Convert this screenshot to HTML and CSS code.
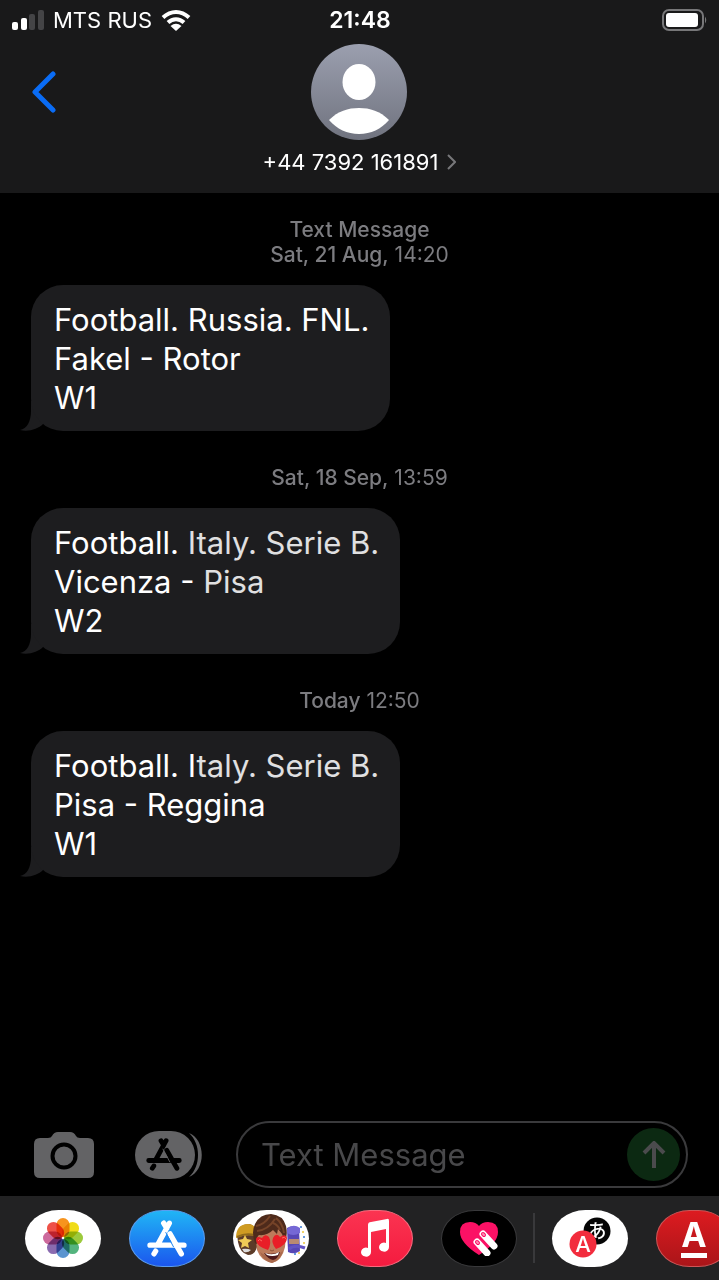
FILE: index.html
```html
<!DOCTYPE html>
<html lang="en">
<head>
    <meta charset="UTF-8">
    <meta name="viewport" content="width=device-width, initial-scale=1.0">
    <title>Messages</title>
    <link rel="stylesheet" href="styles.css">
</head>
<body>
    <svg class="defs" aria-hidden="true">
        <symbol id="store" viewBox="0 0 120 110">
            <g fill="none" stroke="currentColor" stroke-width="16" stroke-linecap="round">
                <path d="M67 9L34 70M50 9l9 15M26 93l-5 8M9 75h102"/>
                <path d="M69 41L103 101"/>
            </g>
            <path d="M56 36L80 81" fill="none" stroke="var(--gap)" stroke-width="3"/>
        </symbol>
        <symbol id="tail" viewBox="0 0 28 30">
            <path d="M11 0V10C11 20 7 28 0 29C9 31 18 28 23 23L28 16V0z" fill="#1d1d1f"/>
        </symbol>
    </svg>

    <header class="header">
        <div class="status">
            <div class="carrier">
                <svg width="32" height="20" viewBox="0 0 32 20">
                    <rect y="12" width="6" height="8" rx="2" fill="#fff"/>
                    <rect x="9" y="8" width="6" height="12" rx="2" fill="#fff"/>
                    <rect x="17" y="4" width="6" height="16" rx="2" fill="#444446"/>
                    <rect x="26" width="6" height="20" rx="2" fill="#444446"/>
                </svg>
                <span>MTS RUS</span>
                <svg width="30" height="22" viewBox="0 0 30 22">
                    <g fill="none" stroke="#fff" stroke-width="4">
                        <path d="M2 8.500Q8 3 15 3T28 8.500"/>
                        <path d="M7 13.500Q10.500 10.200 15 10.200T23 13.500"/>
                    </g>
                    <path d="M9.500 17Q15 12.500 20.500 17L15 22z" fill="#fff"/>
                </svg>
            </div>
            <time class="clock">21:48</time>
            <svg class="battery" width="46" height="22" viewBox="0 0 46 22">
                <rect x="1" y="1" width="40" height="20" rx="6" fill="none" stroke="#777779" stroke-width="2"/>
                <rect x="4" y="4" width="32" height="14" rx="3" fill="#fff"/>
                <path d="M43 7.500q2.500 3.500 0 7z" fill="#777779"/>
            </svg>
        </div>
        <div class="contact-bar">
            <button class="back" aria-label="Back">
                <svg width="24" height="42" viewBox="0 0 24 42">
                    <path d="M21 3L3 21L21 39" fill="none" stroke="#0a6cf5" stroke-width="5" stroke-linecap="round" stroke-linejoin="round"/>
                </svg>
            </button>
            <button class="contact">
                <svg width="96" height="96" viewBox="0 0 96 96">
                    <defs>
                        <linearGradient id="avatar" x2="0" y2="1">
                            <stop offset="0" stop-color="#9b9faf"/>
                            <stop offset="1" stop-color="#70737f"/>
                        </linearGradient>
                    </defs>
                    <circle cx="48" cy="48" r="48" fill="url(#avatar)"/>
                    <ellipse cx="48" cy="38" rx="16.500" ry="18" fill="#fff"/>
                    <path d="M18 76C27 67 37 64 48 64S69 67 78 76C70 85 60 90 48 90S26 85 18 76z" fill="#fff"/>
                </svg>
                <span class="number">+44 7392 161891
                    <svg width="10" height="16" viewBox="0 0 10 16"><path d="M2 1l7 7l-7 7" fill="none" stroke="#77777a" stroke-width="2"/></svg>
                </span>
            </button>
        </div>
    </header>

    <main class="thread">
        <p class="stamp"><b>Text Message</b><br><b>Sat, 21 Aug,</b> 14:20</p>
        <div class="bubble">
            Football. Russia. FNL.<br>Fakel - Rotor<br>W1
            <svg class="tail"><use href="#tail"/></svg>
        </div>
        <p class="stamp"><b>Sat, 18 Sep,</b> 13:59</p>
        <div class="bubble">
            Football. <span class="dim">Italy. Serie B.</span><br>Vicenza - <span class="dim">Pisa</span><br>W2
            <svg class="tail"><use href="#tail"/></svg>
        </div>
        <p class="stamp"><b>Today</b> 12:50</p>
        <div class="bubble">
            Football. I<span class="dim">taly. Serie B.</span><br>Pisa - Reggina<br>W1
            <svg class="tail"><use href="#tail"/></svg>
        </div>
    </main>

    <form class="compose">
        <button type="button" class="camera" aria-label="Camera">
            <svg width="60" height="46" viewBox="0 0 60 46">
                <path d="M6 6H14Q17 6 18 4Q20 0 24 0H36Q40 0 42 4Q43 6 46 6H54Q60 6 60 12V40Q60 46 54 46H6Q0 46 0 40V12Q0 6 6 6z" fill="#636365"/>
                <circle cx="30" cy="24" r="11.500" fill="none" stroke="#000" stroke-width="4"/>
            </svg>
        </button>
        <button type="button" class="apps-toggle" aria-label="Apps">
            <svg width="67" height="48" viewBox="0 0 67 48">
                <rect width="60" height="48" rx="24" fill="#636365"/>
                <path d="M54 2C71 9 71 39 54 46C66 35 66 13 54 2z" fill="#636365"/>
                <use href="#store" x="11" y="7" width="36" height="33"/>
            </svg>
        </button>
        <div class="field">
            <input type="text" placeholder="Text Message" aria-label="Text Message">
            <button type="button" class="send" aria-label="Send">
                <svg width="24" height="28" viewBox="0 0 24 28"><path d="M12 27V3M2 12L12 2L22 12" fill="none" stroke="#4b4b4d" stroke-width="4"/></svg>
            </button>
        </div>
    </form>

    <nav class="tray">
        <div class="group">
            <button class="app photos" aria-label="Photos">
                <svg width="40" height="40" viewBox="-20 -20 40 40">
                    <g class="petals">
                        <rect x="-6.500" y="-20" width="13" height="19" rx="6.500" fill="#f7941e"/>
                        <rect x="-6.500" y="-20" width="13" height="19" rx="6.500" fill="#f0dc18" transform="rotate(45)"/>
                        <rect x="-6.500" y="-20" width="13" height="19" rx="6.500" fill="#9cca3c" transform="rotate(90)"/>
                        <rect x="-6.500" y="-20" width="13" height="19" rx="6.500" fill="#54b47e" transform="rotate(135)"/>
                        <rect x="-6.500" y="-20" width="13" height="19" rx="6.500" fill="#5a94d0" transform="rotate(180)"/>
                        <rect x="-6.500" y="-20" width="13" height="19" rx="6.500" fill="#8a6bb0" transform="rotate(225)"/>
                        <rect x="-6.500" y="-20" width="13" height="19" rx="6.500" fill="#cc6a9c" transform="rotate(270)"/>
                        <rect x="-6.500" y="-20" width="13" height="19" rx="6.500" fill="#ee5148" transform="rotate(315)"/>
                    </g>
                </svg>
            </button>
            <button class="app store" aria-label="App Store">
                <svg width="40" height="37"><use href="#store"/></svg>
            </button>
            <button class="app memoji" aria-label="Memoji">
                <svg width="76" height="57" viewBox="0 0 76 57">
                    <path d="M4 24Q6 14 16 14Q23 15 24 25V37Q22 45 15 45Q7 43 5 32z" fill="#5c3b28"/>
                    <path d="M3 28Q3 14 15 14Q24 14 25 27Q15 23 3 28z" fill="#cf9b22"/>
                    <path d="M4 27Q14 22 24 26" fill="none" stroke="#8f691b" stroke-width="2"/>
                    <path d="M12 25l2 4l5 1l-4 3l1 5l-4-2l-4 2l1-5l-4-3l5-1z" fill="#f0cb57"/>
                    <path d="M9 39Q14 38 18 40Q15 43 11 42z" fill="#ddd"/>
                    <path d="M54 18Q60 14 66 19L67 41Q61 45 55 42z" fill="#5747b5"/>
                    <path d="M54 19Q60 13 67 18V23Q60 27 54 23z" fill="#7568d5"/>
                    <path d="M56 29H66V34H56z" fill="#b98a72"/>
                    <path d="M56 39Q62 34 72 38" fill="none" stroke="#6254c4" stroke-width="3"/>
                    <g fill="#3478d5"><circle cx="68" cy="17" r="1"/><circle cx="71" cy="27" r="1"/><circle cx="62" cy="44" r="1"/></g>
                    <g fill="#edc63a"><circle cx="70" cy="22" r="1"/><circle cx="66" cy="43" r="1"/><circle cx="71" cy="33" r="1"/></g>
                    <path d="M22 23Q26 12 38 12Q51 12 53 25L52 37Q49 51 39 53Q28 51 24 40z" fill="#bd7b5b"/>
                    <path d="M27 42Q38 50 50 41Q48 50 39 53Q30 51 27 42z" fill="#a9694c"/>
                    <path d="M22 33Q18 22 22 14Q27 4 38 4Q50 5 53 16Q55 25 52 32L49 24L45 19L44 24L40 20Q34 26 26 25Q23 27 24 34z" fill="#4e2a1b"/>
                    <path d="M24 21Q35 20 42 9M23 16Q31 15 37 6M43 8Q50 14 51 23M40 13Q45 15 47 20" fill="none" stroke="#754328" stroke-width="2"/>
                    <g fill="#e91e27">
                        <path d="M35 40Q23 36 23 30Q23 25 29 28Q32 23 36 27Q39 33 35 40z"/>
                        <path d="M43 39Q38 33 40 28Q43 22 47 27Q53 23 54 28Q54 35 43 39z"/>
                    </g>
                    <path d="M25 31q1-3 4 0M49 28q3-2 4 1" stroke="#ff6a62" fill="none"/>
                    <path d="M31 43Q39 45 47 42Q45 49 40 50Q35 49 31 43z" fill="#4d191c"/>
                    <path d="M32 43Q40 46 46 42L45 45Q39 47 34 45z" fill="#fff"/>
                    <path d="M37 40q2 2 4 0" fill="none" stroke="#8d5038"/>
                </svg>
            </button>
            <button class="app music" aria-label="Music">
                <svg width="32" height="40" viewBox="0 0 32 40">
                    <path d="M9 7Q9 4 12 4L28 1Q30 0 30 3V29A5 4.500 0 1 1 27 25V11L12 14V34A5 4.500 0 1 1 9 30z" fill="#fff"/>
                </svg>
            </button>
            <button class="app touch" aria-label="Digital Touch">
                <svg width="40" height="36" viewBox="0 0 40 36">
                    <path d="M20 35Q1 23 1 12Q1 2 11 2Q17 2 20 6Q23 2 29 2Q39 2 39 12Q39 23 20 35z" fill="#fb1165"/>
                    <g fill="none" stroke-linecap="round">
                        <path d="M24 14L35 26M18 22L28 33" stroke="#fff" stroke-width="7" stroke-linecap="round"/>
                        <path d="M24 14l1 1M18 22l1 1" stroke="#fb1165" stroke-width="4"/>
                        <path d="M24 14l1 1M18 22l1 1" stroke="#ff8fb5" stroke-width="2"/>
                    </g>
                </svg>
            </button>
        </div>
        <div class="group">
            <button class="app translate" aria-label="Translate">
                <svg width="42" height="42" viewBox="0 0 42 42">
                    <circle cx="28" cy="14" r="13.500" fill="#050505"/>
                    <text class="kana" x="28" y="21">あ</text>
                    <circle cx="14" cy="27" r="13.500" fill="#f22c3d"/>
                    <text class="latin" x="14" y="35">A</text>
                </svg>
            </button>
            <button class="app alfa" aria-label="Alfa"><span>A</span></button>
        </div>
    </nav>
</body>
</html>
```

FILE: styles.css
```css
* { box-sizing: border-box; }
body {
    margin: 0;
    min-height: 100vh;
    display: flex;
    flex-direction: column;
    overflow-x: hidden;
    background: #000;
    color: #fff;
    font-family: Inter, "Liberation Sans", sans-serif;
}
button { padding: 0; border: 0; background: none; color: inherit; font: inherit; }
svg { display: block; flex: none; }
.defs { position: absolute; width: 0; height: 0; }

/* header */
.header { background: #19191a; padding-bottom: 17px; }
.status {
    display: grid;
    grid-template-columns: 1fr auto 1fr;
    align-items: center;
    height: 40px;
    padding: 0 11px 0 12px;
    font-size: 22px;
}
.carrier { display: flex; align-items: center; gap: 9px; }
.clock { font-size: 23px; font-weight: 600; }
.battery { justify-self: end; }
.contact-bar {
    display: grid;
    grid-template-columns: 1fr auto 1fr;
    align-items: start;
    padding: 4px 32px 0;
}
.back { justify-self: start; margin-top: 27px; }
.contact { display: flex; flex-direction: column; align-items: center; gap: 8px; }
.number { display: flex; align-items: center; gap: 8px; font-size: 22px; line-height: 28px; }

/* messages */
.thread { flex: 1; padding: 24px 31px; }
.stamp {
    margin: 0 0 18px;
    text-align: center;
    font-size: 21px;
    line-height: 25px;
    color: #7c7c80;
}
.stamp b { font-weight: 500; }
.bubble {
    position: relative;
    width: fit-content;
    margin-bottom: 34px;
    padding: 15px 21px 14px 23px;
    border-radius: 32px;
    background: #1d1d1f;
    font-size: 31px;
    line-height: 39px;
}
.dim { color: #e0e0e1; }
.tail { position: absolute; left: -11px; bottom: 0; width: 28px; height: 30px; z-index: -1; }

/* compose row */
.compose { display: flex; align-items: center; padding: 0 31px 8px 34px; }
.camera { margin-right: 41px; }
.apps-toggle { margin-right: 34px; color: #000; --gap: #636365; }
.field {
    flex: 1;
    min-width: 0;
    display: flex;
    align-items: center;
    height: 67px;
    padding: 0 6px 0 23px;
    border: 2px solid #3a3a3c;
    border-radius: 34px;
}
.field input {
    flex: 1;
    min-width: 0;
    padding: 0;
    border: 0;
    outline: 0;
    background: none;
    color: #fff;
    font: inherit;
    font-size: 31px;
}
.field input::placeholder { color: #48484a; opacity: 1; }
.send {
    display: flex;
    align-items: center;
    justify-content: center;
    width: 53px;
    height: 53px;
    border-radius: 50%;
    background: #0c2912;
}

/* app tray */
.tray {
    display: flex;
    align-items: center;
    height: 84px;
    padding-left: 25px;
    overflow: hidden;
    background: #222223;
}
.group { flex: none; display: flex; align-items: center; gap: 28px; height: 50px; }
.group:first-child { padding-right: 16px; border-right: 2px solid #39393b; }
.group:last-child { padding-left: 17px; }
.app {
    flex: none;
    display: flex;
    align-items: center;
    justify-content: center;
    width: 76px;
    height: 57px;
    border-radius: 34px / 29px;
    background: #fff;
    overflow: hidden;
}
.petals rect { mix-blend-mode: multiply; }
.store { background: linear-gradient(#20b5f5, #1b56ee); border: 1px solid #5a9df0; --gap: #1d86f2; }
.music { background: linear-gradient(#fb3451, #f41b3f); border: 1px solid #fa6a7e; }
.touch { background: #000; border: 1px solid #39393b; }
.alfa { background: linear-gradient(#dd1b20, #aa1519); border: 1px solid #cf5557; }
.alfa span { padding-bottom: 2px; border-bottom: 5px solid #fff; font-size: 34px; font-weight: 700; line-height: 32px; }
.kana { fill: #fff; font: 500 19px "Noto Sans CJK JP", sans-serif; text-anchor: middle; }
.latin { fill: #fff; font: 500 22px Inter, sans-serif; text-anchor: middle; }
```
